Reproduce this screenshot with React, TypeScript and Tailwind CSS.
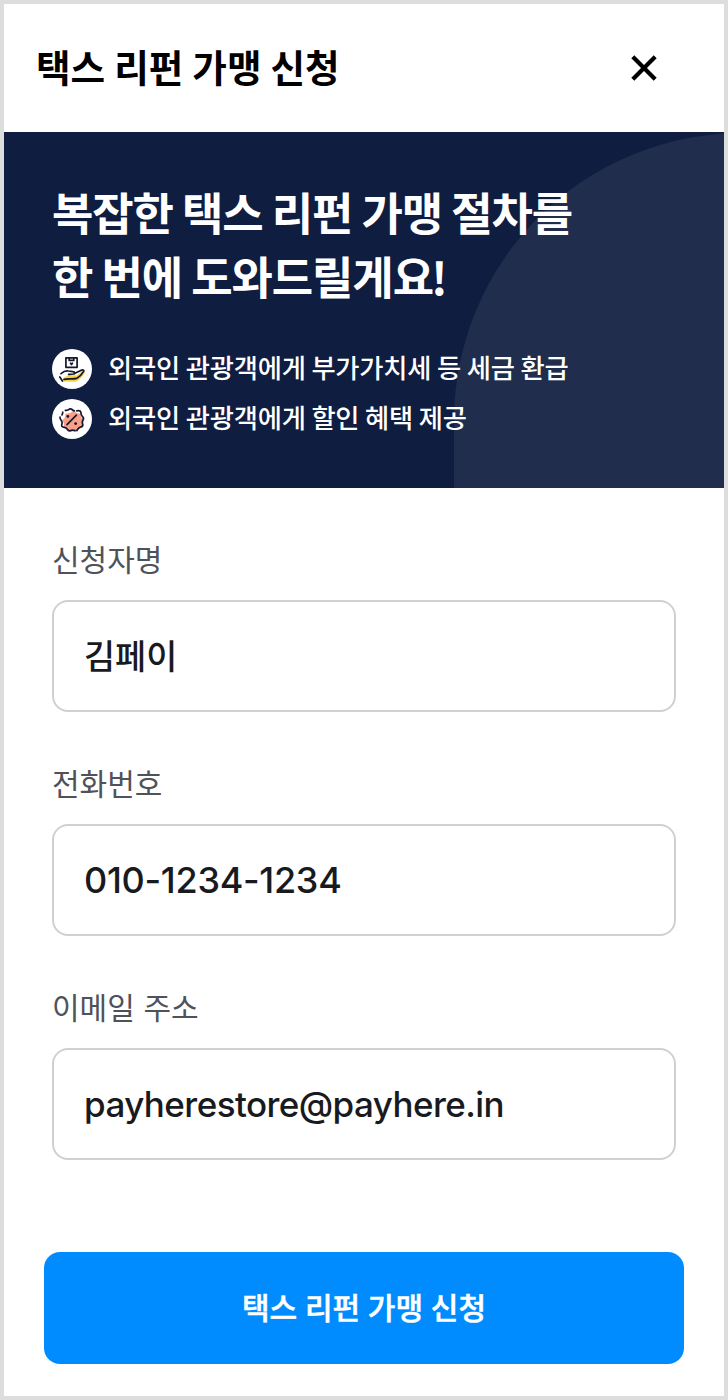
type FieldProps = {
  label: string;
  value: string;
  valueClass: string;
};

const CloseIcon = () => (
  <svg
    className="w-12 h-12"
    viewBox="0 0 48 48"
    fill="none"
    stroke="currentColor"
    strokeWidth={4.2}
  >
    <path d="M12.8 12.8l22.4 22.4M35.2 12.8L12.8 35.2" />
  </svg>
);

const RefundIcon = () => (
  <svg className="w-10 h-10 shrink-0" viewBox="0 0 40 40" fill="none">
    <circle cx="20" cy="20" r="20" fill="#fff" />
    <path
      fill="#f8d147"
      d="M11.5 28.8l5.5-2.8 7.6.4 6-4.4c1.4-.8 2.8 0 2.2 1.8-2.2 4.2-5.2 7.2-8.8 8.6-4.6 1-8.8-.6-12.6.4z"
    />
    <g
      stroke="#15172e"
      strokeWidth={1.7}
      strokeLinecap="round"
      strokeLinejoin="round"
    >
      <path d="M13.9 8.9h11.2v9.4H13.9zM17.2 9.2v2.2h4.6V9.2" />
      <path d="M18.6 14.2l.9 1.3.9-1.3" />
      <path d="M9 24.6c2.4-2 4.8-3 7.2-2.6l4.6.6c2.2.2 2.8 2 .8 2.4l-5 .4" />
      <path d="M22.4 24.4l6.4-3c2-.8 3.6-.6 2.8 1-1.8 3.2-4 5.4-7 7-4 1.2-8.4-.2-12.6 1" />
      <path d="M7.8 28l2.6 4" />
    </g>
  </svg>
);

const DiscountIcon = () => (
  <svg className="w-10 h-10 shrink-0" viewBox="0 0 40 40" fill="none">
    <circle cx="20" cy="20" r="20" fill="#fff" />
    <path
      fill="#f9a08a"
      d="M22 12l3 2.3 3.8.2.3 3.8 2.8 2.8-1.5 3.4.7 4-3.8 1.2-2.2 3.4-3.6-1-3.8 1-2.4-3.2-3.6-1.4.3-3.8-1.7-3.4 2.7-2.8.5-3.8 3.8-.4z"
    />
    <g
      stroke="#15172e"
      strokeWidth={1.7}
      strokeLinecap="round"
      strokeLinejoin="round"
    >
      <path d="M13.4 11.4c2.2.4 3.4-1.2 4.8-1.6 1.6-.2 2.4 1.8 4.2 2" />
      <path d="M24.8 11.8c1.8-.4 3.6-.4 4 1.2.2 1.8.2 3 1.6 4.4 1.6 1.4 1.6 2.4.4 4-1 1.2-.6 2.6 0 4.2.4 1.8-1.2 2.2-2.8 2.6-1.5.5-2.2 2-3.2 3.2" />
      <path d="M23 31.6c-1.8-.8-3.4-.8-5 .2-1.8.6-2.6-1.4-3.6-2.6-1.2-1.2-3.6-.6-4.6-2-.6-1.4.8-2.8.2-4.4-.4-1.6-2.4-2.8-2-4.6" />
      <path d="M10 15.8c.8-.8.4-1.8.8-2.6" />
      <path d="M15 25.6l9.4-9.4" />
      <path d="M15.8 17.4h.1M23.6 24.6h.1" strokeWidth={2.8} />
    </g>
  </svg>
);

const Field = ({ label, value, valueClass }: FieldProps) => (
  <label className="flex flex-col">
    <span className="h-12 mb-4 leading-11 text-[30px] [word-spacing:2px] text-[#505259]">
      {label}
    </span>
    <input
      readOnly
      value={value}
      className={`w-full h-28 px-[30px] rounded-2xl border-2 border-[#d0d0d2] bg-white font-medium text-[#191a20] outline-none ${valueClass}`}
    />
  </label>
);

const benefits = [
  {
    icon: <RefundIcon />,
    text: "외국인 관광객에게 부가가치세 등 세금 환급",
  },
  {
    icon: <DiscountIcon />,
    text: "외국인 관광객에게 할인 혜택 제공",
  },
];

const fields: FieldProps[] = [
  {
    label: "신청자명",
    value: "김페이",
    valueClass: "pb-1 text-[33.8px]",
  },
  {
    label: "전화번호",
    value: "010-1234-1234",
    valueClass: "font-['Inter'] text-[36px] tracking-[-0.3px]",
  },
  {
    label: "이메일 주소",
    value: "payherestore@payhere.in",
    valueClass: "font-['Inter'] text-[35px] tracking-[-0.57px]",
  },
];

export default function App() {
  return (
    <div className="w-[728px] h-[1400px] flex flex-col border-4 border-[#dddddd] bg-white font-['Noto_Sans_CJK_KR',sans-serif]">
      <header className="h-32 shrink-0 flex items-center justify-between pl-8 pr-14">
        <h1 className="pb-1 text-[37.6px] leading-none font-bold [word-spacing:0.5px] text-black">
          택스 리펀 가맹 신청
        </h1>
        <button type="button" aria-label="닫기">
          <CloseIcon />
        </button>
      </header>

      <section className="relative h-[356px] shrink-0 overflow-hidden bg-[#0f1d40] text-white">
        <div className="absolute top-px right-0 bottom-0 w-[270px] overflow-hidden">
          <div className="w-[576px] h-full rounded-tl-[288px] bg-[#202d4c]" />
        </div>
        <div className="relative pl-12 pt-12">
          <h2 className="text-[45px] leading-16 font-bold tracking-[-1.1px]">
            복잡한 택스 리펀 가맹 절차를
            <br />
            한 번에 도와드릴게요
            <span className="-ml-0.5">!</span>
          </h2>
          <ul className="mt-[41px] flex flex-col gap-2.5">
            {benefits.map(({ icon, text }) => (
              <li key={text} className="h-10 flex items-center gap-4">
                {icon}
                <span className="pb-1 text-[26.3px] leading-none font-medium tracking-[-0.2px]">
                  {text}
                </span>
              </li>
            ))}
          </ul>
        </div>
      </section>

      <form className="flex-1 flex flex-col px-10 pt-12 pb-8">
        <div className="flex flex-col gap-12 px-2">
          {fields.map((field) => (
            <Field key={field.label} {...field} />
          ))}
        </div>
        <button
          type="button"
          className="mt-auto h-28 pb-1 rounded-2xl bg-[#008cff] text-[30px] leading-none font-medium [word-spacing:1px] [-webkit-text-stroke:0.5px_white] text-white"
        >
          택스 리펀 가맹 신청
        </button>
      </form>
    </div>
  );
}
